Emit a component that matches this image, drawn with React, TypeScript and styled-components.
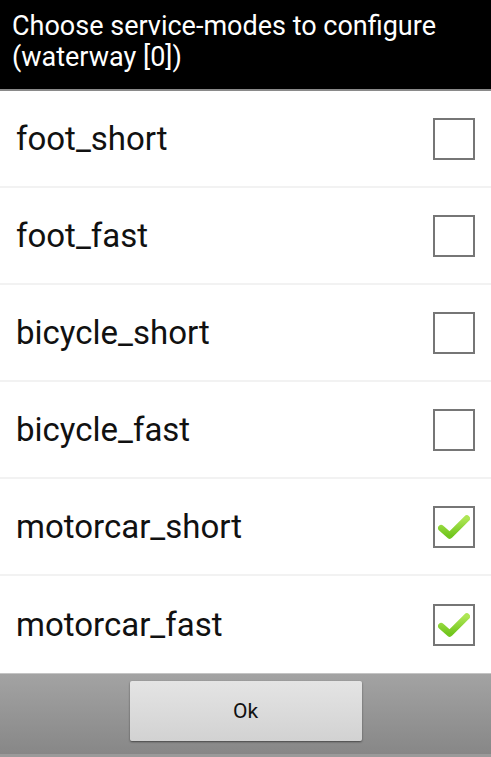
import React from "react";
import styled, { createGlobalStyle } from "styled-components";

const Global = createGlobalStyle`
  html, body { margin: 0; padding: 0; background: #fff; }
  body { font-family: Roboto, "Noto Sans", sans-serif; }
`;

const Screen = styled.div`
  width: 491px;
  height: 757px;
  display: flex;
  flex-direction: column;
  background: #fff;
  overflow: hidden;
`;

const Header = styled.div`
  background: #000;
  color: #fff;
  font-size: 27px;
  line-height: 31px;
  padding: 11px 12px 0 12px;
  box-sizing: border-box;
  border-bottom: 2px solid #8a8a8a;
  height: 91px;
  white-space: nowrap;
`;

const List = styled.div`
  display: flex;
  flex-direction: column;
`;

const Row = styled.div<{ $last?: boolean }>`
  height: 97px;
  box-sizing: border-box;
  display: flex;
  align-items: center;
  justify-content: space-between;
  padding: 0 16px 0 16px;
  border-bottom: ${(p) => (p.$last ? "none" : "2px solid #f2f2f2")};
`;

const Label = styled.span`
  font-size: 33px;
  color: #111;
`;

const Box = styled.div`
  width: 42px;
  height: 42px;
  box-sizing: border-box;
  border: 2px solid #767676;
  display: flex;
  align-items: center;
  justify-content: center;
`;

const Footer = styled.div`
  flex: 1;
  background: linear-gradient(#a3a3a3, #878787);
  border-top: 1px solid #c4c4c4;
  border-bottom: 3px solid #9a9a9a;
  display: flex;
  justify-content: center;
  padding-top: 7px;
  box-sizing: border-box;
`;

const Button = styled.button`
  width: 232px;
  height: 60px;
  background: linear-gradient(#e4e4e4, #d2d2d2);
  border: none;
  border-radius: 2px;
  box-shadow: 0 1px 2px rgba(0, 0, 0, 0.5);
  font-family: Roboto, "Noto Sans", sans-serif;
  font-size: 21px;
  color: #111;
  padding: 0;
`;

const Check = () => (
  <svg width="32" height="28" viewBox="0 0 30 26">
    <defs>
      <linearGradient id="g" x1="0" y1="0" x2="0" y2="1">
        <stop offset="0" stopColor="#aee655" />
        <stop offset="1" stopColor="#72c61e" />
      </linearGradient>
    </defs>
    <path
      d="M3 14 L11 21 L27 5"
      fill="none"
      stroke="url(#g)"
      strokeWidth="6"
      strokeLinecap="round"
      strokeLinejoin="round"
    />
  </svg>
);

const items: [string, boolean][] = [
  ["foot_short", false],
  ["foot_fast", false],
  ["bicycle_short", false],
  ["bicycle_fast", false],
  ["motorcar_short", true],
  ["motorcar_fast", true],
];

export default function App() {
  return (
    <Screen>
      <Global />
      <Header>
        Choose service-modes to configure
        <br />
        (waterway [0])
      </Header>
      <List>
        {items.map(([name, on], i) => (
          <Row key={name} $last={i === items.length - 1}>
            <Label>{name}</Label>
            <Box>{on && <Check />}</Box>
          </Row>
        ))}
      </List>
      <Footer>
        <Button>Ok</Button>
      </Footer>
    </Screen>
  );
}
